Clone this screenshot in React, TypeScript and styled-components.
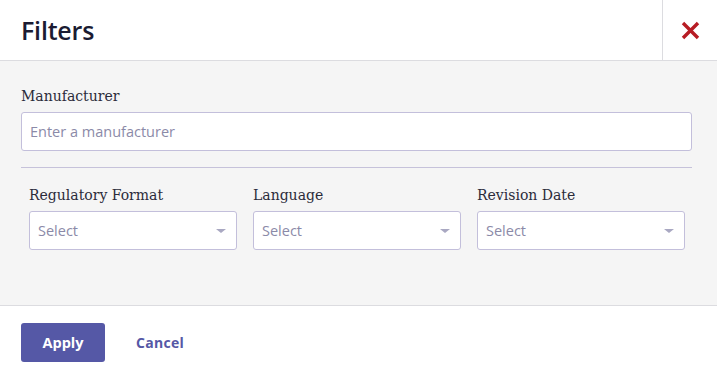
import styled, { createGlobalStyle } from "styled-components";

const GlobalStyle = createGlobalStyle`
    body {
        margin: 0;
        font-family: "Open Sans", "Liberation Sans", sans-serif;
        background: #ffffff;
    }
`;

const Modal = styled.div`
    width: 717px;
    height: 378px;
    display: flex;
    flex-direction: column;
    background: #ffffff;
`;

const Header = styled.header`
    height: 60px;
    display: flex;
    align-items: stretch;
    border-bottom: 1px solid #dcdce0;
`;

const Title = styled.h1`
    flex: 1;
    margin: 0;
    padding-left: 21px;
    display: flex;
    align-items: center;
    font-size: 25px;
    font-weight: 600;
    letter-spacing: -0.2px;
    color: #1b1b32;
`;

const CloseButton = styled.button`
    width: 55px;
    border: none;
    border-left: 1px solid #dcdce0;
    background: #ffffff;
    display: flex;
    align-items: center;
    justify-content: center;
    padding: 0;
    cursor: pointer;
`;

const Body = styled.div`
    flex: 1;
    background: #f5f5f5;
    padding: 27px 25px 0 21px;
`;

const Label = styled.label`
    display: block;
    font-family: "DejaVu Serif", "Liberation Serif", serif;
    font-size: 14px;
    color: #2b2b3a;
    margin-bottom: 8px;
`;

const TextInput = styled.input`
    box-sizing: border-box;
    width: 100%;
    height: 39px;
    border: 1px solid #c3bfdb;
    border-radius: 3px;
    background: #ffffff;
    padding: 0 8px;
    font-family: "Open Sans", sans-serif;
    font-size: 14.5px;
    color: #333344;
    &::placeholder {
        color: #8b8aa8;
    }
`;

const Divider = styled.hr`
    border: none;
    border-top: 1px solid #c6c2da;
    margin: 16px 0 0;
`;

const SelectRow = styled.div`
    display: grid;
    grid-template-columns: repeat(3, 208px);
    column-gap: 16px;
    padding: 19px 0 0 8px;
`;

const Field = styled.div`
    display: flex;
    flex-direction: column;
`;

const SelectBox = styled.div`
    box-sizing: border-box;
    height: 39px;
    border: 1px solid #c3bfdb;
    border-radius: 3px;
    background: #ffffff;
    display: flex;
    align-items: center;
    justify-content: space-between;
    padding: 0 10px 0 8px;
    font-size: 14.5px;
    color: #8b8aa8;
`;

const Caret = styled.span`
    width: 0;
    height: 0;
    border-left: 5px solid transparent;
    border-right: 5px solid transparent;
    border-top: 4px solid #a9a8c2;
`;

const Footer = styled.footer`
    height: 72px;
    border-top: 1px solid #dcdce0;
    display: flex;
    align-items: center;
    padding-left: 21px;
    gap: 31px;
`;

const ApplyButton = styled.button`
    width: 84px;
    height: 39px;
    border: none;
    border-radius: 3px;
    background: #5558a6;
    color: #ffffff;
    font-family: "Open Sans", sans-serif;
    font-size: 14.5px;
    font-weight: 700;
    cursor: pointer;
`;

const CancelButton = styled.button`
    border: none;
    background: none;
    padding: 0;
    color: #5558a6;
    font-family: "Open Sans", sans-serif;
    font-size: 14px;
    font-weight: 700;
    letter-spacing: 0.3px;
    cursor: pointer;
`;

const selects = ["Regulatory Format", "Language", "Revision Date"];

export default function App() {
    return (
        <>
            <GlobalStyle />
            <Modal>
                <Header>
                    <Title>Filters</Title>
                    <CloseButton aria-label="Close">
                        <svg width="19" height="19" viewBox="0 0 19 19">
                            <path d="M2 2 L17 17 M17 2 L2 17" stroke="#b71c24" strokeWidth="3.4" />
                        </svg>
                    </CloseButton>
                </Header>
                <Body>
                    <Label>Manufacturer</Label>
                    <TextInput placeholder="Enter a manufacturer" />
                    <Divider />
                    <SelectRow>
                        {selects.map((name) => (
                            <Field key={name}>
                                <Label>{name}</Label>
                                <SelectBox>
                                    Select
                                    <Caret />
                                </SelectBox>
                            </Field>
                        ))}
                    </SelectRow>
                </Body>
                <Footer>
                    <ApplyButton>Apply</ApplyButton>
                    <CancelButton>Cancel</CancelButton>
                </Footer>
            </Modal>
        </>
    );
}
